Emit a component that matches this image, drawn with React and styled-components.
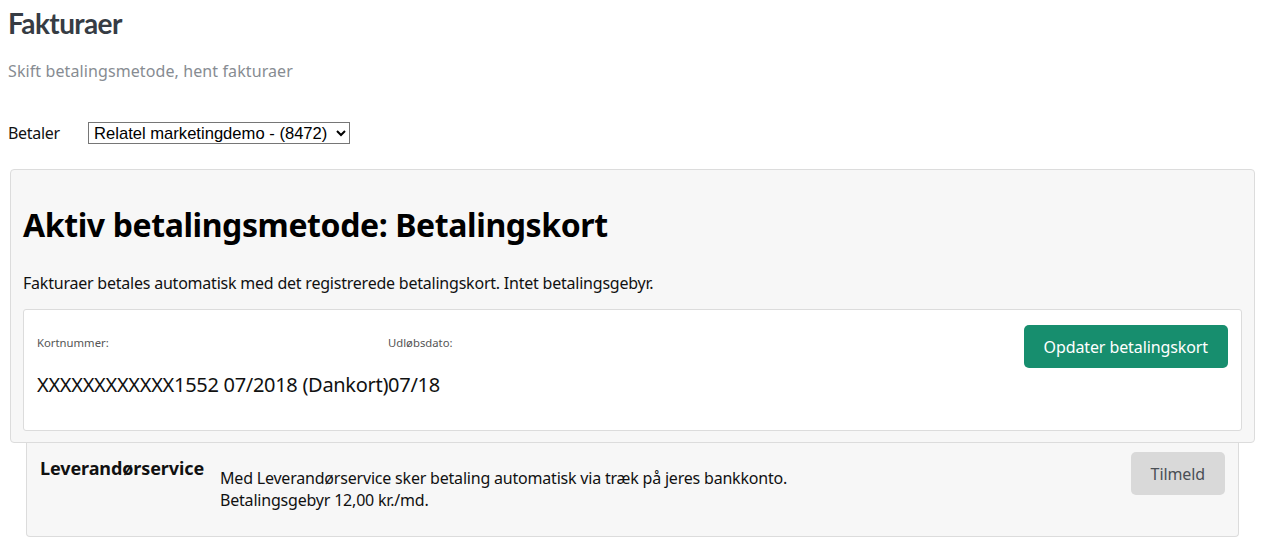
import React from "react";
import styled, { createGlobalStyle } from "styled-components";

const GlobalStyle = createGlobalStyle`
  body {
    margin: 8px;
    background: #fff;
    font-family: "Noto Sans", "Open Sans", sans-serif;
    color: #111;
  }
`;

const PageTitle = styled.h2`
  margin: 0;
  font-family: Lato, "Noto Sans", sans-serif;
  font-size: 28px;
  font-weight: 700;
  letter-spacing: -0.6px;
  color: #363c44;
  line-height: 30px;
`;

const Subtitle = styled.p`
  margin: 22px 0 0;
  font-size: 16px;
  letter-spacing: 0.1px;
  color: #878c92;
  line-height: 22px;
`;

const PayerRow = styled.div`
  display: flex;
  align-items: center;
  margin-top: 39px;
  font-size: 16px;
  height: 24px;
`;

const PayerLabel = styled.span`
  width: 80px;
  letter-spacing: -0.3px;
`;

const PayerSelect = styled.select`
  width: 262px;
  font-family: "Liberation Sans", Arial, sans-serif;
  font-size: 16.6px;
  height: 22px;
  padding: 0 1px;
  border: 1px solid #767676;
  border-radius: 0;
  background: #fff;
  color: #000;
`;

const MethodCard = styled.section`
  margin: 24px 9px 0 2px;
  background: #f7f7f7;
  border: 1px solid #dcdcdc;
  border-radius: 4px;
  padding: 0 12px 11px;
`;

const MethodTitle = styled.h1`
  margin: 0;
  padding-top: 33px;
  font-size: 32px;
  font-weight: 700;
  letter-spacing: -0.4px;
  line-height: 44px;
  color: #000;
`;

const MethodText = styled.p`
  margin: 25px 0 0;
  font-size: 16px;
  letter-spacing: -0.22px;
  line-height: 22px;
`;

const CardBox = styled.div`
  margin-top: 15px;
  background: #fff;
  border: 1px solid #dcdcdc;
  border-radius: 3px;
  height: 122px;
  box-sizing: border-box;
  padding: 15px 12px 0 13px;
  display: flex;
  align-items: flex-start;
`;

const Field = styled.div`
  width: ${(p) => p.$width};
  display: flex;
  flex-direction: column;
`;

const FieldLabel = styled.span`
  margin-top: 11px;
  font-size: 11.3px;
  color: #555;
  line-height: 14px;
`;

const FieldValue = styled.span`
  margin-top: 22px;
  font-size: 20px;
  letter-spacing: -0.3px;
  line-height: 26px;
  white-space: nowrap;
  color: #111;
`;

const Button = styled.button`
  margin-left: auto;
  margin-right: 1px;
  border: none;
  border-radius: 5px;
  font-family: inherit;
  font-size: 16px;
  letter-spacing: -0.1px;
  cursor: pointer;
  padding: 0 ${(p) => (p.$secondary ? "20px" : "20px")};
  height: 43px;
  background: ${(p) => (p.$secondary ? "#d9d9d9" : "#178e6e")};
  color: ${(p) => (p.$secondary ? "#4a4f55" : "#fff")};
`;

const ServiceCard = styled.section`
  margin: 0 25px 0 18px;
  background: #f7f7f7;
  border: 1px solid #dcdcdc;
  border-top: none;
  border-radius: 0 0 4px 4px;
  height: 94px;
  box-sizing: border-box;
  padding: 9px 12px 0 13px;
  display: flex;
  align-items: flex-start;
`;

const ServiceTitle = styled.h3`
  margin: 5px 0 0;
  width: 180px;
  font-size: 18px;
  font-weight: 700;
  letter-spacing: -0.1px;
  line-height: 22px;
`;

const ServiceText = styled.p`
  margin: 15px 0 0;
  font-size: 16px;
  letter-spacing: -0.2px;
  line-height: 22px;
`;

export default function App() {
  return (
    <>
      <GlobalStyle />
      <PageTitle>Fakturaer</PageTitle>
      <Subtitle>Skift betalingsmetode, hent fakturaer</Subtitle>
      <PayerRow>
        <PayerLabel>Betaler</PayerLabel>
        <PayerSelect defaultValue="8472">
          <option value="8472">Relatel marketingdemo - (8472)</option>
        </PayerSelect>
      </PayerRow>
      <MethodCard>
        <MethodTitle>Aktiv betalingsmetode: Betalingskort</MethodTitle>
        <MethodText>
          Fakturaer betales automatisk med det registrerede betalingskort. Intet betalingsgebyr.
        </MethodText>
        <CardBox>
          <Field $width="351px">
            <FieldLabel>Kortnummer:</FieldLabel>
            <FieldValue>XXXXXXXXXXXX1552 07/2018 (Dankort)07/18</FieldValue>
          </Field>
          <Field $width="auto">
            <FieldLabel>Udløbsdato:</FieldLabel>
          </Field>
          <Button>Opdater betalingskort</Button>
        </CardBox>
      </MethodCard>
      <ServiceCard>
        <ServiceTitle>Leverandørservice</ServiceTitle>
        <ServiceText>
          Med Leverandørservice sker betaling automatisk via træk på jeres bankkonto.
          <br />
          Betalingsgebyr 12,00 kr./md.
        </ServiceText>
        <Button $secondary>Tilmeld</Button>
      </ServiceCard>
    </>
  );
}
